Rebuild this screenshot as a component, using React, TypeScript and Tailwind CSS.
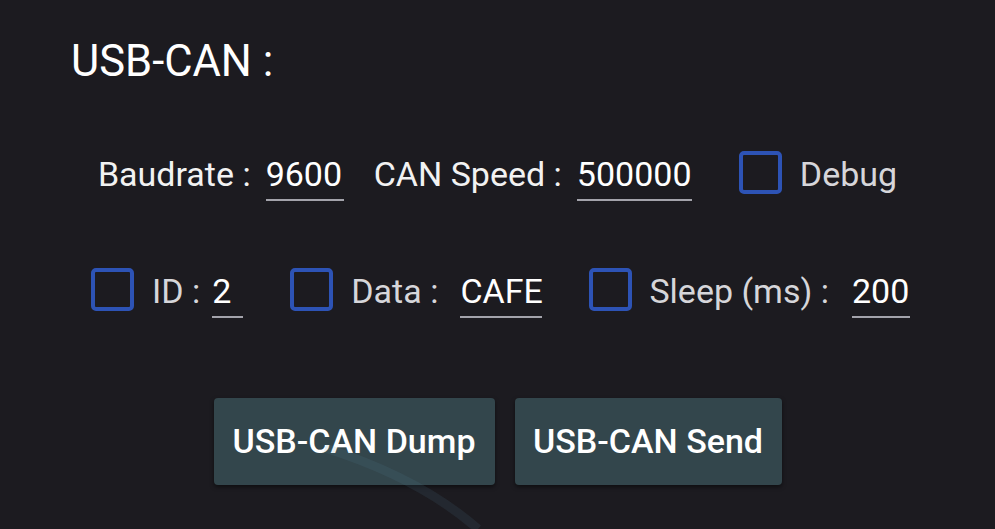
import React, { useState } from 'react';

const font = { fontFamily: 'Roboto, "Noto Sans", sans-serif' };

const Box: React.FC<{ checked: boolean; onToggle: () => void }> = ({ checked, onToggle }) => (
  <button
    onClick={onToggle}
    className="w-[43px] h-[43px] shrink-0 rounded-[5px] border-[4px] border-[#2d53b5] flex items-center justify-center"
  >
    {checked && <span className="w-[20px] h-[20px] bg-[#2d53b5] rounded-sm" />}
  </button>
);

const Field: React.FC<{ value: string; width: string }> = ({ value, width }) => (
  <span className={`${width} block mt-[3px] h-[47px] leading-[40px] pb-[5px] border-b-2 border-[#a3a3ab] text-white`}>
    {value}
  </span>
);

export default function App() {
  const [debug, setDebug] = useState(false);
  const [useId, setUseId] = useState(false);
  const [useData, setUseData] = useState(false);
  const [useSleep, setUseSleep] = useState(false);

  return (
    <div style={font} className="relative w-[995px] h-[529px] overflow-hidden bg-[#1c1b20] text-[34px]">
      {/* Title */}
      <div className="pt-[36px] pl-[71px] text-[43.5px] leading-[52px] text-white">USB-CAN :</div>

      {/* Baudrate / speed row */}
      <div className="mt-[63px] flex items-start justify-center">
        <span className="mt-[3px] leading-[40px] text-[#f2f2f2]">Baudrate :</span>
        <span className="ml-[15px]"><Field value="9600" width="w-[78px]" /></span>
        <span className="ml-[30px] mt-[3px] leading-[40px] text-[#f2f2f2]">CAN Speed :</span>
        <span className="ml-[15px]"><Field value="500000" width="w-[115px]" /></span>
        <span className="ml-[47px]"><Box checked={debug} onToggle={() => setDebug(!debug)} /></span>
        <span className="ml-[18px] mt-[3px] leading-[40px] text-[#d6d6da]">Debug</span>
      </div>

      {/* ID / data / sleep row */}
      <div className="mt-[67px] flex items-start justify-center pl-[6px]">
        <Box checked={useId} onToggle={() => setUseId(!useId)} />
        <span className="ml-[18px] mt-[3px] leading-[40px] text-[#d6d6da]">ID :</span>
        <span className="ml-[12px]"><Field value="2" width="w-[31px]" /></span>
        <span className="ml-[47px]"><Box checked={useData} onToggle={() => setUseData(!useData)} /></span>
        <span className="ml-[18px] mt-[3px] leading-[40px] text-[#d6d6da]">Data :</span>
        <span className="ml-[22px]"><Field value="CAFE" width="w-[82px]" /></span>
        <span className="ml-[47px]"><Box checked={useSleep} onToggle={() => setUseSleep(!useSleep)} /></span>
        <span className="ml-[17px] mt-[3px] leading-[40px] text-[#d6d6da]">Sleep (ms) :</span>
        <span className="ml-[23px]"><Field value="200" width="w-[58px]" /></span>
      </div>

      {/* Buttons */}
      <div className="mt-[80px] flex justify-center gap-[20px]">
        <button className="w-[281px] h-[87px] rounded-[4px] bg-[#33464c] shadow-[0_2px_4px_rgba(0,0,0,0.5)] text-white text-[34px] font-medium">
          USB-CAN Dump
        </button>
        <button className="w-[267px] h-[87px] rounded-[4px] bg-[#33464c] shadow-[0_2px_4px_rgba(0,0,0,0.5)] text-white text-[34px] font-medium">
          USB-CAN Send
        </button>
      </div>

      {/* faint light streak */}
      <svg className="absolute inset-0 pointer-events-none" width="995" height="529">
        <path d="M325 448 Q420 478 478 529" stroke="#5a8aa8" strokeOpacity="0.12" strokeWidth="9" fill="none" />
      </svg>
    </div>
  );
}
